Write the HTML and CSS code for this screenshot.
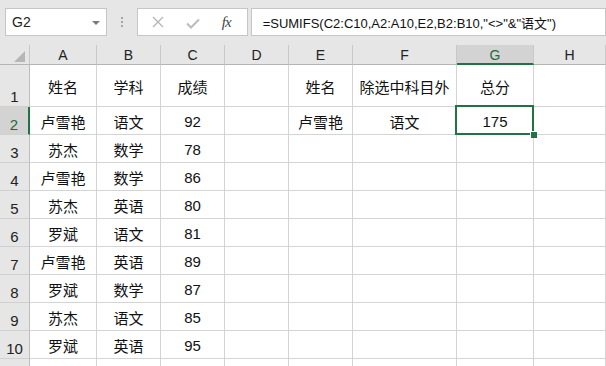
FILE: index.html
```html
<!DOCTYPE html>
<html lang="zh-CN">
<head>
<meta charset="utf-8">
<title>SUMIFS</title>
<link rel="stylesheet" href="styles.css">
</head>
<body>
<div class="app">
  <div class="toolbar">
    <div class="namebox"><span class="name">G2</span><span class="caret"></span></div>
    <div class="grip"><i></i><i></i><i></i></div>
    <div class="fbtns">
      <svg class="ic ic-x" width="12" height="12" viewBox="0 0 12 12"><path d="M1 1 L11 11 M11 1 L1 11" stroke="#b4b4b4" stroke-width="1.3" fill="none"/></svg>
      <svg class="ic ic-check" width="14" height="11" viewBox="0 0 14 11"><path d="M1 5.5 L5 9.5 L13 1.5" stroke="#bcbcbc" stroke-width="2" fill="none"/></svg>
      <span class="fx">fx</span>
    </div>
    <div class="finput">=SUMIFS(C2:C10,A2:A10,E2,B2:B10,"&lt;&gt;"&amp;"语文")</div>
  </div>
  <div class="sheet">
    <div class="c ch corner"></div>
    <div class="c ch">A</div><div class="c ch">B</div><div class="c ch">C</div><div class="c ch">D</div><div class="c ch">E</div><div class="c ch">F</div><div class="c ch sel">G</div><div class="c ch">H</div>

    <div class="c rh">1</div>
    <div class="c">姓名</div><div class="c">学科</div><div class="c">成绩</div><div class="c"></div><div class="c">姓名</div><div class="c">除选中科目外</div><div class="c">总分</div><div class="c"></div>

    <div class="c rh sel">2</div>
    <div class="c">卢雪艳</div><div class="c">语文</div><div class="c">92</div><div class="c"></div><div class="c">卢雪艳</div><div class="c">语文</div><div class="c active">175<span class="selbox"></span><span class="handle"></span></div><div class="c"></div>

    <div class="c rh">3</div>
    <div class="c">苏杰</div><div class="c">数学</div><div class="c">78</div><div class="c"></div><div class="c"></div><div class="c"></div><div class="c"></div><div class="c"></div>

    <div class="c rh">4</div>
    <div class="c">卢雪艳</div><div class="c">数学</div><div class="c">86</div><div class="c"></div><div class="c"></div><div class="c"></div><div class="c"></div><div class="c"></div>

    <div class="c rh">5</div>
    <div class="c">苏杰</div><div class="c">英语</div><div class="c">80</div><div class="c"></div><div class="c"></div><div class="c"></div><div class="c"></div><div class="c"></div>

    <div class="c rh">6</div>
    <div class="c">罗斌</div><div class="c">语文</div><div class="c">81</div><div class="c"></div><div class="c"></div><div class="c"></div><div class="c"></div><div class="c"></div>

    <div class="c rh">7</div>
    <div class="c">卢雪艳</div><div class="c">英语</div><div class="c">89</div><div class="c"></div><div class="c"></div><div class="c"></div><div class="c"></div><div class="c"></div>

    <div class="c rh">8</div>
    <div class="c">罗斌</div><div class="c">数学</div><div class="c">87</div><div class="c"></div><div class="c"></div><div class="c"></div><div class="c"></div><div class="c"></div>

    <div class="c rh">9</div>
    <div class="c">苏杰</div><div class="c">语文</div><div class="c">85</div><div class="c"></div><div class="c"></div><div class="c"></div><div class="c"></div><div class="c"></div>

    <div class="c rh">10</div>
    <div class="c">罗斌</div><div class="c">英语</div><div class="c">95</div><div class="c"></div><div class="c"></div><div class="c"></div><div class="c"></div><div class="c"></div>

    <div class="c rh"></div>
    <div class="c"></div><div class="c"></div><div class="c"></div><div class="c"></div><div class="c"></div><div class="c"></div><div class="c"></div><div class="c"></div>
  </div>
</div>
</body>
</html>
```
FILE: styles.css
```css
* { box-sizing: border-box; }
html, body { margin: 0; padding: 0; }
body {
  width: 606px;
  height: 366px;
  overflow: hidden;
  background: #e6e6e6;
  font-family: "Liberation Sans", "Noto Sans CJK SC", sans-serif;
  color: #1a1a1a;
}
.app { display: flex; flex-direction: column; }

.toolbar {
  height: 45px;
  display: flex;
  align-items: flex-start;
  padding: 8px 0 0 5px;
  background: #e6e6e6;
}
.namebox {
  width: 102px;
  height: 28px;
  background: #fff;
  border: 1px solid #c6c6c6;
  display: flex;
  align-items: center;
  justify-content: space-between;
  padding: 0 6px 0 6px;
  font-size: 14px;
  color: #222;
}
.caret {
  width: 0; height: 0;
  border-left: 4px solid transparent;
  border-right: 4px solid transparent;
  border-top: 4px solid #7a7a7a;
  margin-top: 1px;
}
.grip {
  width: 30px;
  height: 28px;
  display: flex;
  flex-direction: column;
  align-items: center;
  justify-content: center;
  gap: 2px;
}
.grip i { display: block; width: 2px; height: 2px; background: #a6a6a6; }
.fbtns {
  width: 111px;
  height: 28px;
  background: #fff;
  border: 1px solid #c6c6c6;
  display: flex;
  align-items: center;
  padding-left: 14px;
}
.ic-x { margin-right: 22px; }
.ic-check { margin-right: 22px; margin-top: 2px; }
.fx {
  font-family: "Liberation Serif", serif;
  font-style: italic;
  font-size: 15px;
  color: #444;
  letter-spacing: -1px;
}
.finput {
  margin-left: 3px;
  width: 356px;
  height: 28px;
  background: #fff;
  border: 1px solid #c6c6c6;
  display: flex;
  align-items: center;
  padding-left: 11px;
  font-size: 13px;
  color: #111;
  white-space: nowrap;
}

.sheet {
  display: grid;
  grid-template-columns: 30px 67px 64px 64px 64px 64px 104px 77px 1fr;
  grid-template-rows: 20px 42px repeat(10, 28px);
  background: #fff;
}
.c {
  border-right: 1px solid #d4d4d4;
  border-bottom: 1px solid #d4d4d4;
  display: flex;
  align-items: center;
  justify-content: center;
  padding-top: 2px;
  font-size: 15px;
  color: #111;
  position: relative;
}
.ch {
  background: #e6e6e6;
  border-right-color: #c8c8c8;
  border-bottom-color: #b4b4b4;
  font-size: 14px;
  padding-top: 1px;
  color: #222;
}
.ch.sel {
  background: #d3d3d3;
  border-bottom: 2px solid #217346;
  color: #1e6b41;
}
.corner::after {
  content: "";
  position: absolute;
  right: 4px;
  bottom: 2px;
  width: 11px;
  height: 11px;
  background: #b6b6b6;
  clip-path: polygon(100% 0, 100% 100%, 0 100%);
}
.rh {
  background: #e6e6e6;
  border-right-color: #bdbdbd;
  border-bottom-color: #d0d0d0;
  align-items: flex-end;
  padding-top: 0;
  padding-bottom: 1px;
  color: #222;
}
.rh.sel {
  background: #d3d3d3;
  border-right: 2px solid #217346;
  color: #1e6b41;
}
.selbox {
  position: absolute;
  left: -2px;
  top: -2px;
  right: -1px;
  bottom: -1px;
  border: 2px solid #217346;
  z-index: 2;
}
.handle {
  position: absolute;
  right: -4px;
  bottom: -4px;
  width: 7px;
  height: 7px;
  background: #217346;
  border-left: 1px solid #fff;
  border-top: 1px solid #fff;
  z-index: 3;
}
```
